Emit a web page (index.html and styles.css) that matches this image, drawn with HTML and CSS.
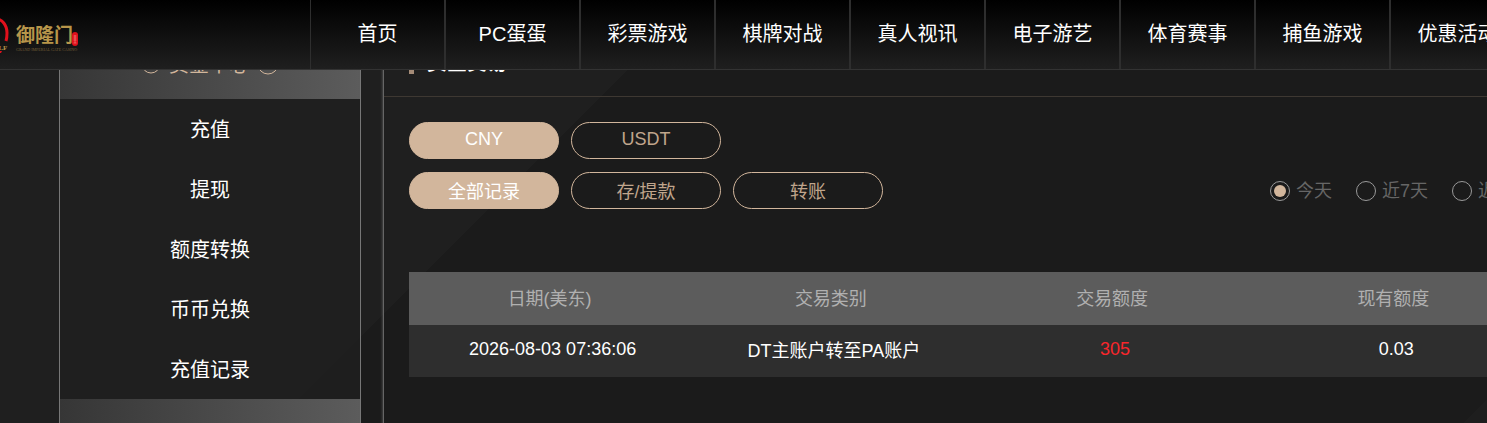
FILE: index.html
```html
<!DOCTYPE html>
<html lang="zh-CN">
<head>
    <meta charset="utf-8">
    <title>资金交易</title>
    <link rel="stylesheet" href="styles.css">
</head>
<body>
    <header class="header">
        <a href="#" class="logo" aria-label="御隆门">
            <svg width="80" height="69" viewBox="0 0 80 69">
                <path d="M-4 19 C2 19 7 25 7 33 C7 36 7 38 6 41" fill="none" stroke="#e0101c" stroke-width="3"/>
                <path d="M0 51 l2 0 l-1 2 l-1 0z" fill="#e0101c"/>
                <text x="-7" y="50" class="logo-mark">GLF</text>
                <text x="16" y="42" class="logo-name">御隆门</text>
                <text x="16" y="51" class="logo-sub">GRAND IMPERIAL GATE CASINO</text>
                <rect x="72" y="32" width="6" height="14" rx="3" fill="#e0101c"/>
                <path d="M73.500 36h3M73.500 38h3M73.500 40h3M73.500 43h3M75 35v8" stroke="#f58a80" stroke-width="0.600"/>
            </svg>
        </a>
        <nav class="nav">
            <a href="#">首页</a>
            <a href="#">PC蛋蛋</a>
            <a href="#">彩票游戏</a>
            <a href="#">棋牌对战</a>
            <a href="#">真人视讯</a>
            <a href="#">电子游艺</a>
            <a href="#">体育赛事</a>
            <a href="#">捕鱼游戏</a>
            <a href="#">优惠活动</a>
        </nav>
    </header>

    <div class="page">
        <div class="container">
            <aside class="sidebar">
                <div class="side-head">
                    <svg width="20" height="20" viewBox="0 0 20 20" fill="none" stroke="currentColor">
                        <circle cx="10" cy="10" r="9"/>
                        <path d="M6 5 L10 10 L14 5 M10 10 V16 M7 11 H13 M7 13 H13"/>
                    </svg>
                    <span>资金中心</span>
                    <svg width="22" height="22" viewBox="0 0 22 22" fill="none" stroke="currentColor">
                        <circle cx="11" cy="11" r="10"/>
                        <path d="M7 9 L11 13 L15 9"/>
                    </svg>
                </div>
                <a href="#" class="side-item">充值</a>
                <a href="#" class="side-item">提现</a>
                <a href="#" class="side-item">额度转换</a>
                <a href="#" class="side-item">币币兑换</a>
                <a href="#" class="side-item">充值记录</a>
                <div class="side-head"></div>
            </aside>

            <main class="panel">
                <h2 class="panel-title">资金交易</h2>
                <div class="panel-body">
                    <div class="filters">
                        <button class="pill active">CNY</button>
                        <button class="pill">USDT</button>
                    </div>
                    <div class="filters">
                        <button class="pill active">全部记录</button>
                        <button class="pill">存/提款</button>
                        <button class="pill">转账</button>
                        <div class="range">
                            <label><input type="radio" name="range" checked><span>今天</span></label>
                            <label><input type="radio" name="range"><span>近7天</span></label>
                            <label><input type="radio" name="range"><span>近30天</span></label>
                        </div>
                    </div>

                    <table class="records">
                        <thead>
                            <tr>
                                <th>日期(美东)</th>
                                <th>交易类别</th>
                                <th>交易额度</th>
                                <th>现有额度</th>
                            </tr>
                        </thead>
                        <tbody>
                            <tr>
                                <td>2026-08-03 07:36:06</td>
                                <td>DT主账户转至PA账户</td>
                                <td class="amount">305</td>
                                <td>0.03</td>
                            </tr>
                        </tbody>
                    </table>
                </div>
            </main>
        </div>
    </div>
</body>
</html>
```

FILE: styles.css
```css
* {
    box-sizing: border-box;
}

body {
    margin: 0;
    font-family: "Liberation Sans", "Noto Sans CJK SC", sans-serif;
    font-size: 18px;
    color: #fff;
    background-color: #1b1b1b;
    overflow: hidden;
}

a {
    color: inherit;
    text-decoration: none;
}

.header {
    position: fixed;
    top: 0;
    left: 0;
    z-index: 10;
    display: flex;
    width: 100%;
    height: 70px;
    overflow: hidden;
    background: linear-gradient(#000, #1f1f1f);
    border-bottom: 1px solid #333;
}

.logo {
    flex: 0 0 310px;
}

.logo svg {
    display: block;
}

.logo-mark {
    font: bold 7px "Liberation Serif", serif;
    fill: #b8964a;
}

.logo-name {
    font: bold 19px "Noto Sans CJK SC", sans-serif;
    fill: #b8964a;
}

.logo-sub {
    font: 4px "Liberation Serif", serif;
    fill: #77603a;
}

.nav {
    display: flex;
}

.nav a {
    flex: 0 0 135px;
    height: 69px;
    line-height: 68px;
    font-size: 20px;
    text-align: center;
    border-left: 1px solid #2e2e2e;
    border-right: 1px solid #2e2e2e;
}

.nav a:hover {
    color: #d2b69c;
}

.page {
    min-width: 1618px;
    min-height: 100vh;
    padding-top: 29px;
    background: linear-gradient(135deg, #1f1f1f 493px, #1b1b1b 493px, #1b1b1b 1334px, #1e1e1e 1334px);
}

.container {
    display: flex;
    gap: 22px;
    width: 1500px;
    margin: 0 auto;
}

.sidebar {
    flex: 0 0 302px;
    border: 1px solid #777;
    border-top: none;
    background-color: rgba(32, 32, 32, 0.7);
}

.side-head {
    display: flex;
    align-items: center;
    justify-content: center;
    gap: 8px;
    height: 70px;
    font-size: 20px;
    color: #d2b69c;
    background: linear-gradient(90deg, #363636, #5c5c5c);
}

.side-head span {
    padding-bottom: 2px;
}

.side-item {
    display: block;
    height: 60px;
    line-height: 62px;
    font-size: 20px;
    text-align: center;
}

.side-item:hover {
    color: #d2b69c;
}

.panel {
    flex: 1;
    border-left: 1px solid #666;
    box-shadow: 0 0 3px #666;
}

.panel-title {
    display: flex;
    align-items: center;
    gap: 13px;
    height: 68px;
    margin: 0;
    padding: 0 25px 2px;
    font-size: 20px;
    border-bottom: 1px solid #3e3832;
}

.panel-title::before {
    content: "";
    width: 5px;
    height: 24px;
    background-color: #a58c78;
}

.panel-body {
    padding: 25px;
}

.filters {
    display: flex;
    align-items: center;
    gap: 12px;
    margin-bottom: 13px;
}

.pill {
    width: 150px;
    height: 37px;
    padding: 0 0 2px;
    font: inherit;
    color: #c0a58c;
    background: none;
    border: 1px solid #d2b69c;
    border-radius: 19px;
    cursor: pointer;
}

.pill.active {
    color: #fff;
    background-color: #d2b69c;
}

.range {
    display: flex;
    gap: 24px;
    margin-left: auto;
    color: #666;
}

.range label {
    display: flex;
    align-items: center;
    gap: 6px;
}

.range span {
    padding-bottom: 4px;
}

.range input {
    appearance: none;
    width: 20px;
    height: 20px;
    margin: 0;
    padding: 3px;
    border: 1px solid #999;
    border-radius: 50%;
}

.range input:checked {
    background: #d2b69c content-box;
}

.records {
    width: 100%;
    margin-top: 63px;
    table-layout: fixed;
    border-collapse: collapse;
    text-align: center;
}

.records th {
    height: 53px;
    padding: 0 0 4px;
    font-weight: normal;
    color: #b0b0b0;
    background-color: #5c5c5c;
}

.records td {
    height: 52px;
    padding: 0 0 4px 6px;
    background-color: #2e2e2e;
}

.records .amount {
    color: #f8262b;
}
```
